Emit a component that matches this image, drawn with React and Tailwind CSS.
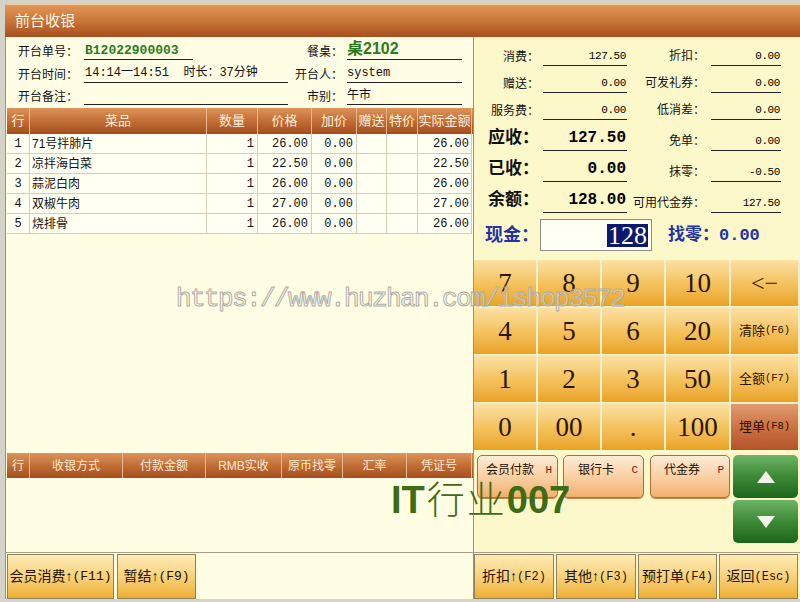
import React from 'react';

const SANS = "font-['Liberation_Sans','Noto_Sans_CJK_SC',sans-serif]";
const MONO = "font-['Liberation_Mono','Noto_Sans_CJK_SC',monospace]";
const SERIF = "font-['Liberation_Serif','Noto_Sans_CJK_SC',serif]";

const dishes = [
  { no: 1, name: '71号拌肺片', qty: 1, price: '26.00', extra: '0.00', total: '26.00' },
  { no: 2, name: '凉拌海白菜', qty: 1, price: '22.50', extra: '0.00', total: '22.50' },
  { no: 3, name: '蒜泥白肉', qty: 1, price: '26.00', extra: '0.00', total: '26.00' },
  { no: 4, name: '双椒牛肉', qty: 1, price: '27.00', extra: '0.00', total: '27.00' },
  { no: 5, name: '烧排骨', qty: 1, price: '26.00', extra: '0.00', total: '26.00' },
];

const dishCols = 'grid grid-cols-[23px_177px_51px_54px_45px_30px_31px_54px]';
const payCols = 'grid grid-cols-[23px_93px_83px_76px_61px_64px_65px]';
const headBg = 'bg-linear-to-b from-[#dc945a] via-[#c26e36] to-[#a44d1f]';
const goldBtn =
  'bg-linear-to-b from-[#fdebb4] via-[#f8d27c] to-[#edae28] border border-[#8c8260] text-[#241400]';

function FormRow({ h, label, valueW, valueClass, value, rLabel, rClass, rValue }) {
  return (
    <div className={`flex items-end ${h}`}>
      <div className="w-[72px] text-right text-[12px] leading-[16px] text-[#111]">{label}</div>
      <div
        className={`ml-[6px] ${valueW} h-[19px] border-b border-[#222] flex items-end pb-[1px] whitespace-pre ${valueClass}`}
      >
        {value}
      </div>
      <div className="flex-1 text-right text-[12px] leading-[16px] text-[#111]">{rLabel}</div>
      <div
        className={`ml-[4px] mr-[11px] w-[115px] h-[19px] border-b border-[#222] flex items-end pb-[1px] ${rClass}`}
      >
        {rValue}
      </div>
    </div>
  );
}

function Sum({ h, l1, v1, l2, v2, big }) {
  return (
    <div className={`flex items-end ${h}`}>
      <div
        className={
          big
            ? 'w-[65px] text-right text-[17px] font-bold leading-[22px] pb-[2px] text-[#111]'
            : 'w-[65px] text-right text-[12px] leading-[16px] pb-[1px] text-[#111]'
        }
      >
        {l1}
      </div>
      <div
        className={
          big
            ? `ml-[4px] w-[84px] border-b border-[#222] text-right text-[16px] font-bold leading-[22px] pb-[1px] pr-[1px] ${MONO}`
            : `ml-[4px] w-[84px] border-b border-[#222] text-right text-[11px] tracking-[-0.4px] leading-[16px] pb-[1px] pr-[1px] ${MONO}`
        }
      >
        {v1}
      </div>
      <div className="w-[78px] text-right text-[12px] leading-[16px] pb-[2px] text-[#111] whitespace-nowrap">{l2}</div>
      <div
        className={`ml-[6px] w-[70px] border-b border-[#222] text-right text-[11px] tracking-[-0.4px] leading-[16px] pb-[1px] pr-[1px] ${MONO}`}
      >
        {v2}
      </div>
    </div>
  );
}

function Key({ k }) {
  const fn = k.includes('(');
  if (fn) {
    const [name, code] = k.split('(');
    const red = name === '埋单';
    return (
      <div
        className={`flex items-center justify-center text-[#2a1200] ${
          red
            ? 'bg-linear-to-b from-[#e19a70] via-[#cc7244] to-[#b3532a]'
            : 'bg-linear-to-b from-[#fce0a2] via-[#f5c35e] to-[#e8a322]'
        }`}
      >
        <span className="text-[13px]">{name}</span>
        <span className={`text-[10.5px] ${MONO}`}>({code}</span>
      </div>
    );
  }
  return (
    <div className="flex items-center justify-center bg-linear-to-b from-[#fce0a2] via-[#f5c35e] to-[#e8a322] text-[#2a1600]">
      <span className={`${SERIF} ${k === '<-' ? 'text-[24px]' : 'text-[27px]'} leading-none`}>
        {k === '<-' ? '<−' : k}
      </span>
    </div>
  );
}

const keys = [
  '7', '8', '9', '10', '<-',
  '4', '5', '6', '20', '清除(F6)',
  '1', '2', '3', '50', '全额(F7)',
  '0', '00', '.', '100', '埋单(F8)',
];

function PayBtn({ label, letter, pl, w }) {
  return (
    <div
      className={`${w} h-[43px] rounded-[5px] border border-[#a8703e] bg-linear-to-b from-[#fdebd6] via-[#fad1a4] to-[#f2b06e] shadow-[0_1px_0_#c98a50] flex items-start pt-[7px] ${pl} pr-[5px]`}
    >
      <span className="text-[12px] leading-[14px] text-[#221100]">{label}</span>
      <span className={`ml-auto text-[11px] leading-[14px] text-[#6e2410] ${MONO}`}>{letter}</span>
    </div>
  );
}

function Arrow({ up }) {
  return (
    <div className="h-[43px] rounded-[5px] bg-linear-to-b from-[#6cb466] via-[#3c8a36] to-[#1c661c] flex items-center justify-center">
      <svg width="18" height="12" viewBox="0 0 18 12">
        {up ? (
          <polygon points="9,0 18,12 0,12" fill="#f2f2e6" />
        ) : (
          <polygon points="0,0 18,0 9,12" fill="#f2f2e6" />
        )}
      </svg>
    </div>
  );
}

export default function App() {
  return (
    <div className={`relative w-[800px] h-[602px] overflow-hidden bg-[#d5d2c8] pt-[4px] pl-[5px] ${SANS}`}>
      {/* window title */}
      <div className="h-[33px] border-t border-[#f0c8a0] bg-linear-to-b from-[#e19756] via-[#c97638] to-[#a84e1f] flex items-center pl-[10px] text-[15px] text-[#fff3e2]">
        前台收银
      </div>

      <div className="flex h-[562px]">
        {/* left: order */}
        <div className="w-[468px] flex flex-col border-l border-[#9c9474] bg-[#fffde4]">
          <div className="h-[71px] pt-[1px]">
            <FormRow
              h="h-[22px]"
              label="开台单号："
              valueW="w-[109px]"
              valueClass={`text-[13px] font-bold text-[#2b7a1c] leading-[15px] pl-px ${MONO}`}
              value="B12022900003"
              rLabel="餐桌："
              rClass="text-[16px] font-bold text-[#2b7a1c] leading-[18px]"
              rValue="桌2102"
            />
            <FormRow
              h="h-[23px]"
              label="开台时间："
              valueW="w-[204px]"
              valueClass={`text-[12px] leading-[15px] pl-px text-[#111] ${MONO}`}
              value="14:14一14:51  时长：37分钟"
              rLabel="开台人："
              rClass={`text-[12px] leading-[15px] text-[#111] ${MONO}`}
              rValue="system"
            />
            <FormRow
              h="h-[22px]"
              label="开台备注："
              valueW="w-[204px]"
              valueClass="text-[12px]"
              value=""
              rLabel="市别："
              rClass="text-[12px] leading-[15px] text-[#111]"
              rValue="午市"
            />
          </div>

          {/* dish list */}
          <div className="ml-px">
            <div className={`${dishCols} h-[26px] ${headBg} text-[13px] text-[#fcefdc]`}>
              {['行', '菜品', '数量', '价格', '加价', '赠送', '特价', '实际金额'].map((t) => (
                <div key={t} className="flex items-center justify-center border-r border-[#e6b890] whitespace-nowrap">
                  {t}
                </div>
              ))}
            </div>
            {dishes.map((d) => (
              <div key={d.no} className={`${dishCols} h-[20px] bg-[#fffff2] text-[12px] text-[#111]`}>
                <div className={`border-r border-b border-[#d3cfba] flex items-center justify-center ${MONO}`}>{d.no}</div>
                <div className="border-r border-b border-[#d3cfba] flex items-center pl-[2px]">{d.name}</div>
                <div className={`border-r border-b border-[#d3cfba] flex items-center justify-end pr-[3px] ${MONO}`}>{d.qty}</div>
                <div className={`border-r border-b border-[#d3cfba] flex items-center justify-end pr-[3px] ${MONO}`}>{d.price}</div>
                <div className={`border-r border-b border-[#d3cfba] flex items-center justify-end pr-[3px] ${MONO}`}>{d.extra}</div>
                <div className="border-r border-b border-[#d3cfba]" />
                <div className="border-r border-b border-[#d3cfba]" />
                <div className={`border-r border-b border-[#d3cfba] flex items-center justify-end pr-[2px] ${MONO}`}>{d.total}</div>
              </div>
            ))}
          </div>

          <div className="h-[219px]" />

          {/* payments */}
          <div className={`ml-px ${payCols} h-[25px] ${headBg} text-[12px] text-[#fbe9d2]`}>
            {['行', '收银方式', '付款金额', 'RMB实收', '原币找零', '汇率', '凭证号'].map((t) => (
              <div key={t} className="flex items-center justify-center border-r border-[#e6b890] whitespace-nowrap">
                {t}
              </div>
            ))}
          </div>
          <div className="h-[74px]" />

          <div className="h-[47px] border-t border-[#a8a084] flex gap-[3px] pl-px pt-px">
            <div className={`${goldBtn} w-[107px] h-[45px] flex items-center justify-center text-[14px] whitespace-nowrap`}>
              会员消费↑<span className={`text-[13px] ${MONO}`}>(F11)</span>
            </div>
            <div className={`${goldBtn} w-[79px] h-[45px] flex items-center justify-center text-[14px] whitespace-nowrap`}>
              暂结↑<span className={`text-[13px] ${MONO}`}>(F9)</span>
            </div>
          </div>
        </div>

        {/* right: settlement */}
        <div className="w-[327px] flex flex-col border-l border-[#9c9474] bg-[#fdf8ca]">
          <div className="h-[221px] pt-[2px]">
            <Sum h="h-[27px]" l1="消费：" v1="127.50" l2="折扣：" v2="0.00" />
            <Sum h="h-[27px]" l1="赠送：" v1="0.00" l2="可发礼券：" v2="0.00" />
            <Sum h="h-[27px]" l1="服务费：" v1="0.00" l2="低消差：" v2="0.00" />
            <Sum h="h-[31px]" big l1="应收：" v1="127.50" l2="免单：" v2="0.00" />
            <Sum h="h-[31px]" big l1="已收：" v1="0.00" l2="抹零：" v2="-0.50" />
            <Sum h="h-[31px]" big l1="余额：" v1="128.00" l2="可用代金券：" v2="127.50" />
            <div className="mt-[6px] h-[32px] flex items-center">
              <div className="w-[66px] pl-[11px] text-[18px] font-bold text-[#2333a6] whitespace-nowrap">现金：</div>
              <div className="w-[112px] h-[32px] border border-[#8e8e88] bg-[#fffff4] flex items-center justify-end pr-[3px]">
                <span className={`${SERIF} bg-[#0b1a70] text-white text-[26px] leading-[23px] px-[1px]`}>128</span>
              </div>
              <div className="ml-[16px] text-[17px] font-bold text-[#2333a6] whitespace-nowrap">
                找零：<span className={MONO}>0.00</span>
              </div>
            </div>
          </div>

          <div className="mt-[2px] grid grid-cols-[62px_62px_62px_63px_67px] grid-rows-[46px_46px_46px_46px] gap-[2px] bg-[#eef0cc]">
            {keys.map((k, i) => (
              <Key key={i} k={k} />
            ))}
          </div>

          <div className="h-[102px] flex pt-[5px]">
            <div className="flex items-start pl-[3px]">
              <PayBtn label="会员付款" letter="H" pl="pl-[8px]" w="w-[81px]" />
              <div className="ml-[5px]">
                <PayBtn label="银行卡" letter="C" pl="pl-[14px]" w="w-[81px]" />
              </div>
              <div className="ml-[6px]">
                <PayBtn label="代金券" letter="P" pl="pl-[13px]" w="w-[80px]" />
              </div>
            </div>
            <div className="ml-auto mr-[2px] w-[65px] flex flex-col gap-[2px]">
              <Arrow up />
              <Arrow />
            </div>
          </div>

          <div className="h-[47px] border-t border-[#a8a084] flex gap-[2px] pt-px pr-[2px]">
            {[
              ['折扣↑', '(F2)', 'w-[80px]'],
              ['其他↑', '(F3)', 'w-[80px]'],
              ['预打单', '(F4)', 'w-[79px]'],
              ['返回', '(Esc)', 'flex-1'],
            ].map(([a, b, w]) => (
              <div key={a} className={`${goldBtn} ${w} h-[45px] flex items-center justify-center text-[14px] whitespace-nowrap`}>
                {a}
                <span className={`text-[12px] ${MONO}`}>{b}</span>
              </div>
            ))}
          </div>
        </div>
      </div>

      {/* watermarks laid over the form */}
      <div
        className={`pointer-events-none absolute left-[176px] top-[286px] whitespace-nowrap text-[26px] tracking-[-1.6px] leading-[26px] text-[rgba(255,255,255,0.35)] [-webkit-text-stroke:1px_#aeaea6] ${MONO}`}
      >
        https://www.huzhan.com/ishop3572
      </div>
      <div className="pointer-events-none absolute left-[391px] top-[481px] whitespace-nowrap text-[38px] leading-[32px] text-[#3c6c14]">
        <span className="font-bold font-['Liberation_Sans',sans-serif]">IT</span>
        <span className="font-['Noto_Sans_CJK_SC',sans-serif] font-light tracking-[2px] ml-[2px]">行业</span>
        <span className="font-bold font-['Liberation_Sans',sans-serif]">007</span>
      </div>
    </div>
  );
}
